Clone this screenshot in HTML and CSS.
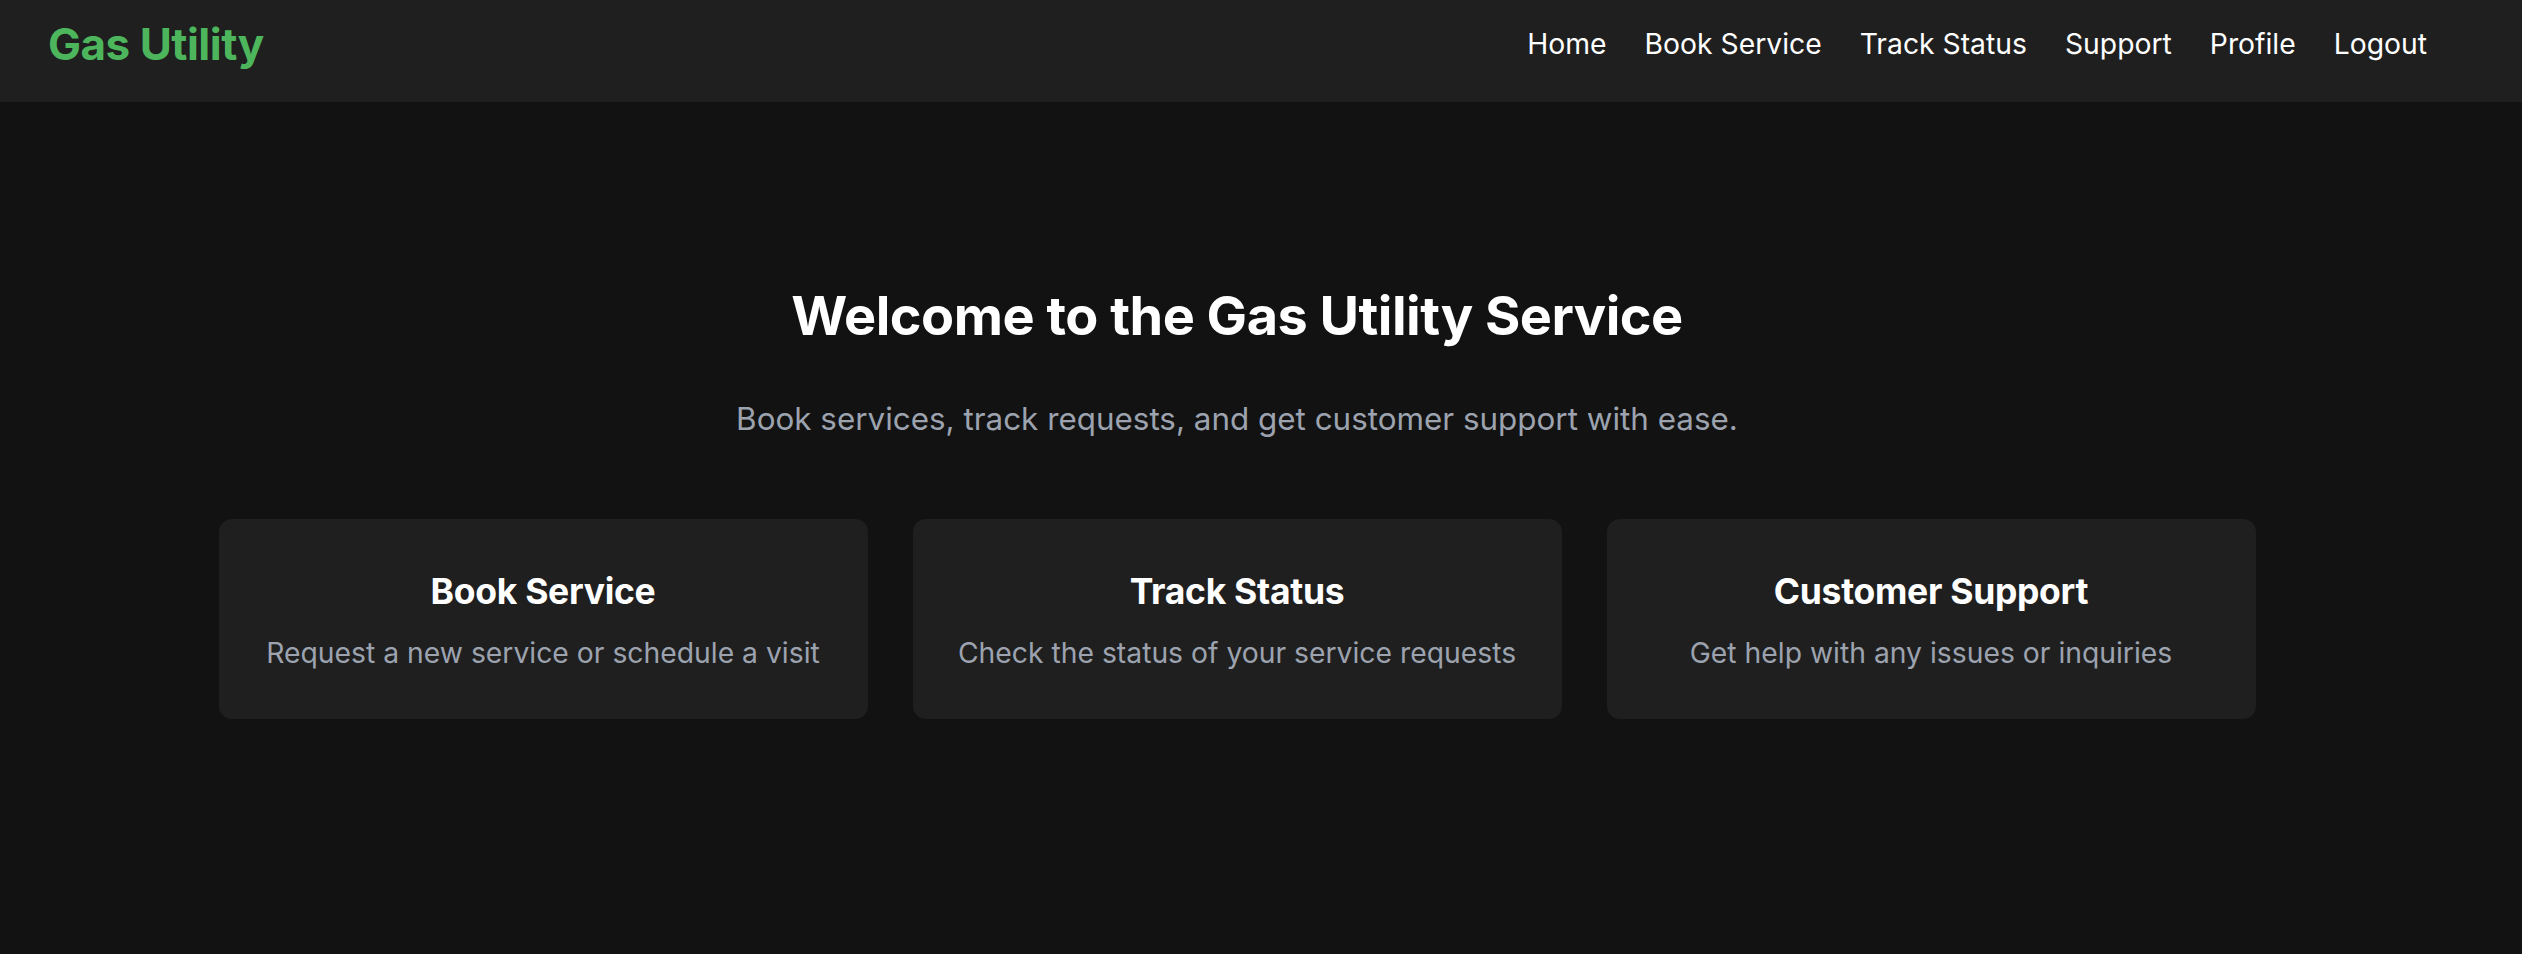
FILE: index.html
```html
<!DOCTYPE html>
<html lang="en">
<head>
<meta charset="utf-8">
<title>Gas Utility</title>
<link rel="stylesheet" href="styles.css">
</head>
<body>
<header class="topbar">
  <div class="logo">Gas Utility</div>
  <nav class="nav">
    <a href="#">Home</a>
    <a href="#">Book Service</a>
    <a href="#">Track Status</a>
    <a href="#">Support</a>
    <a href="#">Profile</a>
    <a href="#">Logout</a>
  </nav>
</header>
<main class="main">
  <h1 class="title">Welcome to the Gas Utility Service</h1>
  <p class="subtitle">Book services, track requests, and get customer support with ease.</p>
  <section class="cards">
    <div class="card">
      <h3 class="card-title">Book Service</h3>
      <p class="card-text">Request a new service or schedule a visit</p>
    </div>
    <div class="card">
      <h3 class="card-title">Track Status</h3>
      <p class="card-text">Check the status of your service requests</p>
    </div>
    <div class="card">
      <h3 class="card-title">Customer Support</h3>
      <p class="card-text">Get help with any issues or inquiries</p>
    </div>
  </section>
</main>
</body>
</html>
```

FILE: styles.css
```css
* { box-sizing: border-box; }
html, body { margin: 0; padding: 0; }
body {
  background: #121212;
  color: #ffffff;
  font-family: Inter, "Noto Sans", sans-serif;
  min-height: 954px;
}
.topbar {
  height: 102px;
  background: #1f1f1f;
  display: flex;
  align-items: center;
  justify-content: space-between;
  padding: 0 95px 14px 48px;
}
.logo {
  color: #4db65d;
  font-weight: 700;
  font-size: 44px;
  letter-spacing: -0.5px;
}
.nav {
  display: flex;
  gap: 38px;
}
.nav a {
  color: #ffffff;
  text-decoration: none;
  font-size: 28.3px;
}
.main {
  padding: 0 48px 0 0;
  display: flex;
  flex-direction: column;
  align-items: center;
}
.title {
  margin: 182px 0 0;
  font-size: 54px;
  font-weight: 700;
  line-height: 1.2;
  letter-spacing: -0.5px;
}
.subtitle {
  margin: 52px 0 0;
  font-size: 31.4px;
  color: #9ca3af;
  line-height: 1.2;
}
.cards {
  margin-top: 81px;
  display: grid;
  grid-template-columns: repeat(3, 649px);
  gap: 45px;
}
.card {
  background: #1f1f1f;
  border-radius: 13px;
  height: 200px;
  display: flex;
  flex-direction: column;
  align-items: center;
  padding-top: 52px;
}
.card-title {
  margin: 0;
  font-size: 35.5px;
  font-weight: 700;
  line-height: 1.2;
  letter-spacing: -0.3px;
}
.card-text {
  margin: 23px 0 0;
  font-size: 28.3px;
  color: #9ca3af;
  line-height: 1.2;
}
```
